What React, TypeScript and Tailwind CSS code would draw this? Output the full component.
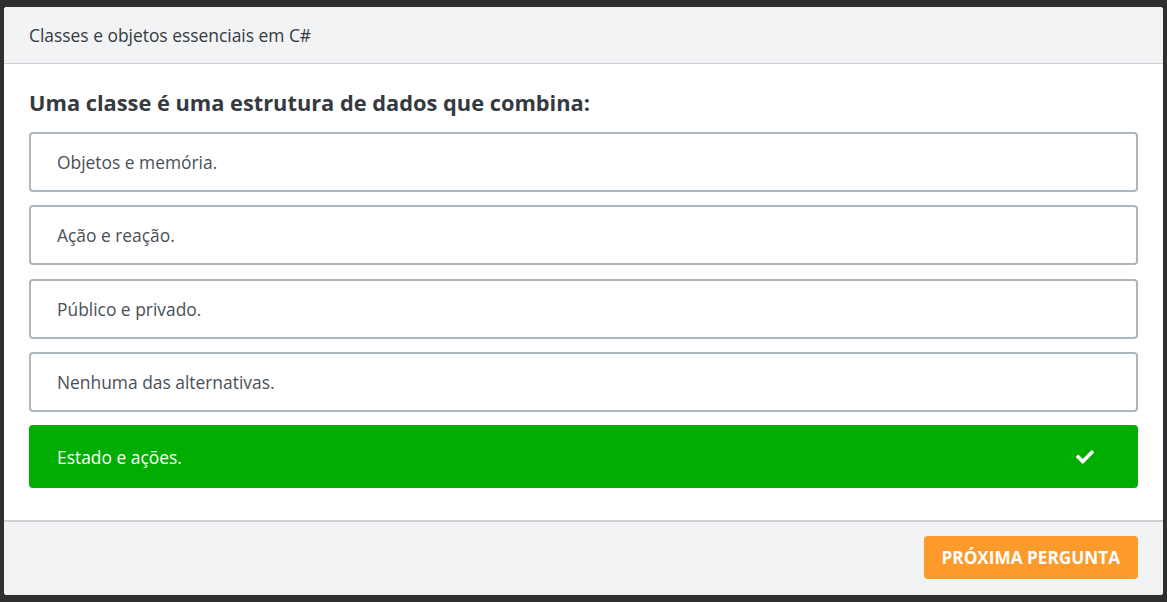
const options = [
  "Objetos e memória.",
  "Ação e reação.",
  "Público e privado.",
  "Nenhuma das alternativas.",
];

function CheckIcon() {
  return (
    <svg viewBox="0 0 512 512" className="w-[18px] h-[18px]" fill="currentColor">
      <path d="M173.9 439.4l-166.4-166.4c-10-10-10-26.2 0-36.2l36.2-36.2c10-10 26.2-10 36.2 0L192 312.7 432.1 72.6c10-10 26.2-10 36.2 0l36.2 36.2c10 10 10 26.2 0 36.2l-294.4 294.4c-10 10-26.2 10-36.2 0z" />
    </svg>
  );
}

export default function App() {
  return (
    <div
      className="w-[1167px] h-[602px] bg-[#2f2f2f] pt-[7px] pl-[4px] pr-[4px]"
      style={{ fontFamily: '"Open Sans", "Noto Sans", sans-serif' }}
    >
      <div className="w-[1159px] h-[588px] bg-white rounded-[3px] overflow-hidden flex flex-col">
        {/* Header */}
        <div className="h-[57px] shrink-0 bg-[#f2f3f5] border-b border-[#cfd1d4] flex items-center px-[25px] text-[17.4px] text-[#343a40]">
          Classes e objetos essenciais em C#
        </div>

        {/* Body */}
        <div className="flex-1 px-[25px] pt-[25px]">
          <h2 className="text-[21.8px] leading-[28px] font-bold text-[#343a40]">
            Uma classe é uma estrutura de dados que combina:
          </h2>
          <div className="mt-[15px] flex flex-col gap-[13.3px]">
            {options.map((o) => (
              <div
                key={o}
                className="h-[60px] border-2 border-[#adb5bd] rounded-[4px] flex items-center px-[26px] text-[17.4px] text-[#495057]"
              >
                {o}
              </div>
            ))}
            <div className="h-[63px] bg-[#00ad00] rounded-[4px] flex items-center justify-between pl-[28px] pr-[44px] text-[17.4px] text-white">
              <span>Estado e ações.</span>
              <CheckIcon />
            </div>
          </div>
        </div>

        {/* Footer */}
        <div className="h-[75px] shrink-0 bg-[#f2f3f5] border-t-2 border-[#cfd1d4] flex items-start justify-end pt-[14px] pr-[25px]">
          <button className="h-[43px] px-[18px] bg-[#fd9a2c] rounded-[4px] text-white font-bold text-[17.2px] uppercase">
            Próxima pergunta
          </button>
        </div>
      </div>
    </div>
  );
}
